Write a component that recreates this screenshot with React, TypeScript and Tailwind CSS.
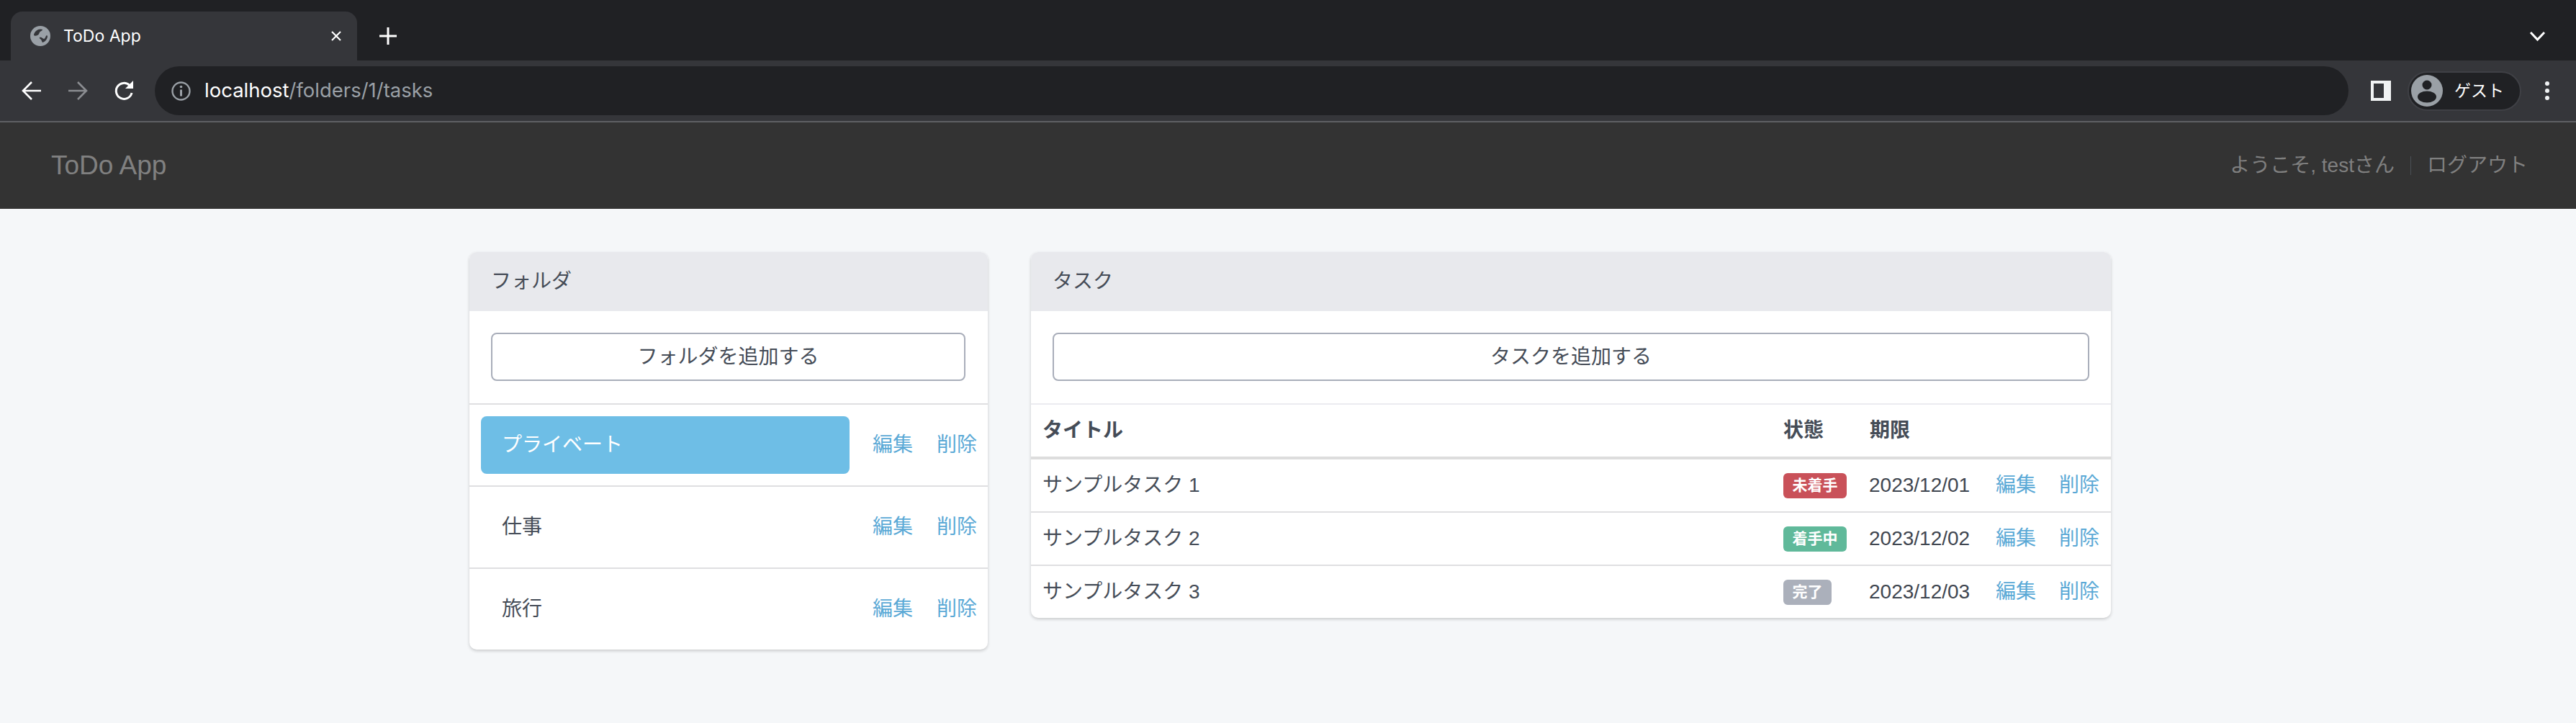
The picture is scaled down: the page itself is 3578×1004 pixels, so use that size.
const folders = [
  { name: "プライベート", active: true },
  { name: "仕事", active: false },
  { name: "旅行", active: false },
];

const tasks = [
  { title: "サンプルタスク 1", status: "未着手", badge: "bg-[#c95159] w-[88px]", due: "2023/12/01", row: "h-[75px]" },
  { title: "サンプルタスク 2", status: "着手中", badge: "bg-[#60b99a] w-[88px]", due: "2023/12/02", row: "h-[74px] border-t-2 border-[#dfdfe1]" },
  { title: "サンプルタスク 3", status: "完了", badge: "bg-[#abb0bb] w-[67px]", due: "2023/12/03", row: "h-[73px] border-t-2 border-[#dfdfe1]" },
];

function BrowserChrome() {
  return (
    <div className="[font-family:Inter,'Noto_Sans_CJK_JP',sans-serif]">
      {/* Tab strip */}
      <div className="h-[84px] bg-[#202124] flex items-end pl-[15px] pr-[40px]">
        <div className="w-[481px] h-[68px] bg-[#35363a] rounded-t-[16px] flex items-center pl-[27px] pr-[21px] text-white">
          <svg width="28" height="28" viewBox="0 0 28 28">
            <circle cx="14" cy="14" r="14" fill="#9aa0a6" />
            <path d="M8 7c3-3 7-3 9-2 0 2-3 2-4 4s-1 3-3 4-4 1-5 0c0-2 1-4 3-6z" fill="#35363a" />
            <path d="M13 16c3-1 4 2 6 2s2-4 4-5l1 1c0 4-3 8-7 9-1-1-1-3-2-4s-3-2-2-3z" fill="#35363a" />
          </svg>
          <span className="ml-[18px] text-[23px] leading-none flex-1">ToDo App</span>
          <svg width="16" height="16" viewBox="0 0 16 16" fill="none" stroke="#fff" strokeWidth="2.2">
            <path d="M2 2l12 12M14 2L2 14" />
          </svg>
        </div>
        <div className="h-[68px] flex items-center ml-[31px] flex-1">
          <svg width="24" height="24" viewBox="0 0 24 24" fill="none" stroke="#fff" strokeWidth="3">
            <path d="M12 0v24M0 12h24" />
          </svg>
        </div>
        <div className="h-[68px] flex items-center">
          <svg width="26" height="16" viewBox="0 0 26 16" fill="none" stroke="#fff" strokeWidth="3">
            <path d="M3 3l9.500 10L22 3" />
          </svg>
        </div>
      </div>
      {/* Toolbar */}
      <div className="h-[84px] bg-[#35363a] flex items-center pl-[30px]">
        <svg width="28" height="28" viewBox="0 0 28 28" fill="none" stroke="#fff" strokeWidth="2.6">
          <path d="M27 14H3M14 2L2 14l12 12" />
        </svg>
        <svg className="ml-[36px]" width="28" height="28" viewBox="0 0 28 28" fill="none" stroke="#8b8d91" strokeWidth="2.6">
          <path d="M1 14h24M14 2l12 12-12 12" />
        </svg>
        <svg className="ml-[36px]" width="30" height="30" viewBox="0 0 30 30" fill="none">
          <path d="M25 18a11 11 0 1 1-3-10.500" stroke="#fff" strokeWidth="3" />
          <path d="M27 1v11H16z" fill="#fff" />
        </svg>
        <div className="ml-[27px] w-[3047px] h-[68px] rounded-[34px] bg-[#202124] flex items-center pl-[23px]">
          <svg width="27" height="27" viewBox="0 0 27 27" fill="none">
            <circle cx="13.500" cy="13.500" r="12" stroke="#9aa0a6" strokeWidth="2.400" />
            <path d="M13.500 11.500v9" stroke="#9aa0a6" strokeWidth="3" />
            <circle cx="13.500" cy="7.500" r="1.800" fill="#9aa0a6" />
          </svg>
          <span className="ml-[19px] text-[27.5px] leading-none text-white">
            localhost<span className="text-[#9aa0a6]">/folders/1/tasks</span>
          </span>
        </div>
        <div className="ml-[31px] w-[28px] h-[28px] bg-[#f1f3f4] flex items-center pl-[4px]">
          <div className="w-[14px] h-[20px] bg-[#35363a]" />
        </div>
        <div className="ml-[23px] w-[158px] h-[55px] rounded-full bg-[#202124] border-2 border-[#3f4045] flex items-center pl-[3px]">
          <svg width="44" height="44" viewBox="0 0 44 44">
            <circle cx="22" cy="22" r="22" fill="#9aa0a6" />
            <circle cx="22" cy="14" r="6.500" fill="#202124" />
            <ellipse cx="22" cy="30.500" rx="13" ry="8" fill="#202124" />
          </svg>
          <span className="ml-[16px] text-[23px] leading-none text-white">ゲスト</span>
        </div>
        <div className="ml-[33px] flex flex-col gap-[4px]">
          <div className="w-[6px] h-[6px] rounded-full bg-[#f1f3f4]" />
          <div className="w-[6px] h-[6px] rounded-full bg-[#f1f3f4]" />
          <div className="w-[6px] h-[6px] rounded-full bg-[#f1f3f4]" />
        </div>
      </div>
      <div className="h-[2px] bg-[#5f6064]" />
    </div>
  );
}

function FolderCard() {
  return (
    <div className="w-[720px] rounded-[10px] overflow-hidden bg-white shadow-[0_2px_4px_rgba(0,0,0,0.18)] self-start">
      <div className="h-[82px] bg-[#e8e9ed] pl-[30px] flex items-center">フォルダ</div>
      <div className="h-[128px] pl-[30px] pr-[31px] pt-[30px]">
        <button className="w-full h-[67px] border-2 border-[#a9aeba] rounded-[8px] bg-white">フォルダを追加する</button>
      </div>
      {folders.map((folder) => (
        <div key={folder.name} className="h-[114px] border-t-2 border-[#dfdfe1] flex items-center pl-[16px]">
          <div className={`w-[512px] shrink-0 h-[80px] rounded-[8px] pl-[29px] flex items-center ${folder.active ? "bg-[#6ebee6] text-white" : ""}`}>
            {folder.name}
          </div>
          <a className="ml-[32px] shrink-0 text-[#5aa9d6]">編集</a>
          <a className="ml-[33px] shrink-0 text-[#5aa9d6]">削除</a>
        </div>
      ))}
    </div>
  );
}

function TaskCard() {
  return (
    <div className="w-[1500px] rounded-[10px] overflow-hidden bg-white shadow-[0_2px_4px_rgba(0,0,0,0.18)] self-start">
      <div className="h-[82px] bg-[#e8e9ed] pl-[30px] flex items-center">タスク</div>
      <div className="h-[128px] pl-[30px] pr-[30px] pt-[30px]">
        <button className="w-full h-[67px] border-2 border-[#a9aeba] rounded-[8px] bg-white">タスクを追加する</button>
      </div>
      <table className="w-full table-fixed border-t-2 border-[#ebebf0]">
        <colgroup>
          <col className="w-[1028px]" />
          <col className="w-[120px]" />
          <col className="w-[175px]" />
          <col className="w-[89px]" />
          <col />
        </colgroup>
        <thead>
          <tr className="h-[75px] border-b-4 border-[#dddddd] text-left">
            <th className="pl-[16px] font-bold">タイトル</th>
            <th className="pl-[17px] font-bold">状態</th>
            <th className="pl-[17px] font-bold">期限</th>
            <th />
            <th />
          </tr>
        </thead>
        <tbody>
          {tasks.map((task) => (
            <tr key={task.title} className={task.row}>
              <td className="pl-[16px]">{task.title}</td>
              <td className="pl-[17px]">
                <span className={`${task.badge} h-[35px] rounded-[6px] text-white font-bold text-[21px] flex items-center justify-center`}>
                  {task.status}
                </span>
              </td>
              <td className="pl-[16px] text-[#3f4650]">{task.due}</td>
              <td className="pl-[17px] text-[#5aa9d6]">編集</td>
              <td className="pl-[16px] text-[#5aa9d6]">削除</td>
            </tr>
          ))}
        </tbody>
      </table>
    </div>
  );
}

export default function App() {
  return (
    <div className="h-[1004px] overflow-hidden bg-[#f5f7f9] text-[#454c57] text-[28px] [font-family:'Liberation_Sans','Noto_Sans_CJK_JP',sans-serif]">
      <BrowserChrome />
      {/* Navbar */}
      <nav className="h-[120px] bg-[#333333] flex items-center justify-between pl-[71px] pr-[67px] text-[#808080]">
        <span className="text-[37px]">ToDo App</span>
        <div className="flex items-center text-[28px]">
          <span>ようこそ, testさん</span>
          <span className="mx-[22px] w-px h-[26px] bg-[#4a4f55]" />
          <a>ログアウト</a>
        </div>
      </nav>
      <main className="flex gap-[60px] pl-[652px] pt-[60px]">
        <FolderCard />
        <TaskCard />
      </main>
    </div>
  );
}
